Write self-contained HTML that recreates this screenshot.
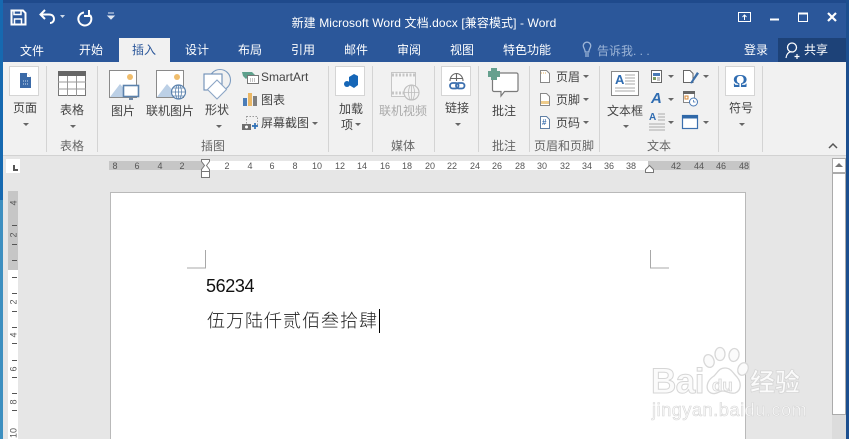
<!DOCTYPE html>
<html><head><meta charset="utf-8"><style>
html,body{margin:0;padding:0;width:849px;height:439px;overflow:hidden;background:#e6e6e6}
body{position:relative;font-family:"Liberation Sans","Noto Sans CJK SC",sans-serif;font-size:12px;color:#444}
.t{position:absolute;white-space:nowrap;line-height:16px;transform:translateX(-50%)}
.l{position:absolute;white-space:nowrap;line-height:16px}
.sep{position:absolute;top:66px;width:1px;height:86px;background:#d4d4d4}
.w{color:#fff}
.ar{position:absolute;width:0;height:0;border-left:3px solid transparent;border-right:3px solid transparent;border-top:3px solid #666}
.n{position:absolute;font-size:9px;line-height:10px;color:#555;transform:translateX(-50%);top:161px}
.box{position:absolute;top:66px;width:30px;height:30px;background:#fff;border:1px solid #d5d5d5;box-sizing:border-box}
svg{position:absolute;overflow:visible}
</style></head><body>
<!-- title + tabs -->
<div style="position:absolute;left:0;top:0;width:849px;height:62px;background:#2b579a"></div>
<div style="position:absolute;left:0;top:0;width:849px;height:3px;background:#1f4a8c"></div>
<div style="position:absolute;left:0;top:0;width:3px;height:439px;background:#1669b0"></div>
<div style="position:absolute;left:0;top:200px;width:3px;height:239px;background:#3d8fc0"></div>
<div style="position:absolute;left:846px;top:0;width:3px;height:439px;background:#1c4f8f"></div>
<div style="position:absolute;left:119px;top:38px;width:51px;height:24px;background:#f1f1f1"></div>
<div style="position:absolute;left:778px;top:38px;width:68px;height:24px;background:#1d4278"></div>

<svg style="left:0;top:0" width="849" height="62" fill="none">
<path d="M11.500 10.500h11.500l2.500 2.500v11.500h-14z" stroke="#fff" stroke-width="2"/>
<path d="M14 10.500h7v4h-7zM14.500 24v-5h7v5" stroke="#fff" stroke-width="1.500"/>
<path d="M41 14.500h8c4 0 5 2.500 5 4.500s-1.500 4-4 4M45 10l-4.500 4.500L45 19" stroke="#fff" stroke-width="2"/>
<path d="M60 15h5l-2.500 3z" fill="#cfdaea"/>
<path d="M84 12.500a6.500 6.500 0 1 0 6 2.500M89 10v6h-5" stroke="#fff" stroke-width="2"/>
<path d="M108 13h6M108 16h6l-3 3z" fill="#dfe6f1" stroke="#dfe6f1"/>
<rect x="738.500" y="12.500" width="12" height="9" stroke="#fff"/>
<path d="M744.500 20v-5M742.500 17l2-2 2 2M741 12.500h7" stroke="#fff"/>
<path d="M770 19.500h9" stroke="#fff" stroke-width="2"/>
<rect x="798.500" y="13" width="9" height="8.500" stroke="#fff"/><path d="M798 13.500h10" stroke="#fff" stroke-width="2"/>
<path d="M828 13l8 8M836 13l-8 8" stroke="#fff" stroke-width="2.200"/>
<path d="M585 56h4M585 54h4M583.500 47a3.700 3.700 0 1 1 7 0c-.5 1.500-1.500 2.500-1.700 5h-3.600c-.2-2.500-1.200-3.500-1.700-5z" stroke="#9db5d7" stroke-width="1.300"/>
<circle cx="792" cy="47.500" r="4.500" stroke="#fff" stroke-width="1.300"/>
<path d="M786 58c.5-4 2.500-6 5.500-6.500M797 54v5M794.500 56.500h5" stroke="#fff" stroke-width="1.200"/>
</svg>

<div class="t w" style="left:424px;top:14.500px;font-size:12px;letter-spacing:.1px">新建 Microsoft Word 文档.docx [兼容模式] - Word</div>
<div class="t w" style="left:32px;top:43px">文件</div>
<div class="t w" style="left:91px;top:42px">开始</div>
<div class="t" style="left:144px;top:42px;color:#2b579a">插入</div>
<div class="t w" style="left:197px;top:42px">设计</div>
<div class="t w" style="left:250px;top:42px">布局</div>
<div class="t w" style="left:303px;top:42px">引用</div>
<div class="t w" style="left:356px;top:42px">邮件</div>
<div class="t w" style="left:409px;top:42px">审阅</div>
<div class="t w" style="left:462px;top:42px">视图</div>
<div class="t w" style="left:527px;top:42px">特色功能</div>
<div class="l" style="left:597px;top:43px;color:#9db5d7">告诉我. . .</div>
<div class="t w" style="left:756px;top:42px">登录</div>
<div class="l w" style="left:804px;top:42px">共享</div>

<!-- ribbon -->
<div style="position:absolute;left:3px;top:62px;width:843px;height:93px;background:#f1f1f1;border-bottom:1px solid #d2d2d2;box-sizing:content-box"></div>

<div class="sep" style="left:46px"></div><div class="sep" style="left:97px"></div>
<div class="sep" style="left:328px"></div><div class="sep" style="left:372px"></div>
<div class="sep" style="left:434px"></div><div class="sep" style="left:478px"></div>
<div class="sep" style="left:529px"></div><div class="sep" style="left:599px"></div>
<div class="sep" style="left:718px"></div><div class="sep" style="left:762px"></div>

<div class="box" style="left:9px"></div>
<div class="box" style="left:335px"></div>
<div class="box" style="left:441px"></div>
<div class="box" style="left:725px"></div>

<svg style="left:0;top:0" width="849" height="160" fill="none">
<!-- page -->
<path d="M20 73h7l4 4v11H20z" fill="#3b6aa8"/><path d="M27 73l4 4h-4z" fill="#fff"/><path d="M23 81h5M23 84h5" stroke="#cfe0f2" stroke-dasharray="1 1"/>
<!-- table -->
<rect x="58.500" y="71.500" width="27" height="24" fill="#fff" stroke="#777"/>
<rect x="58" y="71" width="28" height="5" fill="#666"/>
<path d="M58 82h28M58 89h28M67.500 76v20M76.500 76v20" stroke="#999"/>
<!-- picture -->
<rect x="109.500" y="70.500" width="27" height="27" fill="#fff" stroke="#8a8a8a"/>
<circle cx="130" cy="77" r="3" fill="#f0bd6c"/>
<path d="M110 97l10-13 8 9 3 4z" fill="#bcd0e6"/>
<rect x="123.500" y="85.500" width="15" height="11" fill="#fff" stroke="#5b82ad" stroke-width="1.600"/>
<path d="M129 99h4" stroke="#44688f" stroke-width="1.500"/>
<!-- online picture -->
<rect x="156.500" y="70.500" width="27" height="27" fill="#fff" stroke="#8a8a8a"/>
<circle cx="177" cy="77" r="3" fill="#f0bd6c"/>
<path d="M157 97l10-13 8 9 3 4z" fill="#bcd0e6"/>
<circle cx="178.500" cy="92" r="7" fill="#fff" stroke="#5b82ad" stroke-width="1.200"/>
<path d="M171.500 92h14M173 88h11M173 96h11M178.500 85v14" stroke="#5b82ad" stroke-width=".8"/>
<ellipse cx="178.500" cy="92" rx="3" ry="7" stroke="#5b82ad" stroke-width=".8"/>
<!-- shapes -->
<circle cx="220" cy="80" r="10.500" stroke="#7d9cc0" stroke-width="1.100"/>
<rect x="204" y="74" width="18" height="16" fill="#fff" stroke="#6c8db5" stroke-width="1.100"/>
<path d="M217 80l9.500 9.500-9.500 9.500-9.500-9.500z" fill="#fff" stroke="#8ca6c6" stroke-width="1.100"/>
<!-- smartart -->
<path d="M242 72h10l4 4h-7l-3 3-3-3z" fill="#5ea08c"/>
<rect x="247.500" y="75.500" width="11" height="8" fill="#fff" stroke="#777"/><path d="M250 79h6M250 81h6" stroke="#888" stroke-dasharray="1 1"/>
<!-- chart -->
<rect x="243" y="98" width="4" height="8" fill="#4b7db8"/><rect x="248" y="93" width="4" height="13" fill="#eab765"/><rect x="253" y="96" width="4" height="10" fill="#7f7f7f"/>
<!-- screenshot -->
<rect x="246.500" y="116.500" width="11" height="9" stroke="#999" stroke-dasharray="1.500 1.500"/>
<rect x="242" y="124" width="9" height="6" fill="#6e6e6e"/><circle cx="246.500" cy="127" r="1.500" fill="#fff"/>
<path d="M255 123v6M252 126h6" stroke="#2e70b6" stroke-width="1.700"/>
<!-- addins -->
<path d="M349 77l5-3 4 2v9l-4 3-5-3z" fill="#1566b7"/><circle cx="347" cy="84" r="3" fill="#1566b7"/>
<!-- video -->
<rect x="391.500" y="72.500" width="24" height="24" fill="#f6f6f6" stroke="#c6c6c6"/>
<path d="M392 75h23M392 93h23" stroke="#c6c6c6" stroke-width="3" stroke-dasharray="2 1.500"/>
<circle cx="411.500" cy="92.500" r="7.500" fill="#f3f3f3" stroke="#bdbdbd" stroke-width="1.100"/>
<path d="M404 92.500h15M411.500 85v15" stroke="#bdbdbd" stroke-width=".8"/><ellipse cx="411.500" cy="92.500" rx="3" ry="7.500" stroke="#bdbdbd" stroke-width=".8"/>
<!-- link -->
<path d="M450 81a6.500 7.500 0 0 1 13 0M450 78.500h13M456.500 73.500v7.500" stroke="#666" stroke-width="1.100"/>
<rect x="450" y="83" width="8.500" height="5.500" rx="2.700" stroke="#3b6fae" stroke-width="1.800"/><rect x="456" y="83" width="8.500" height="5.500" rx="2.700" stroke="#3b6fae" stroke-width="1.800"/>
<!-- comment -->
<path d="M492.500 73h24a1.500 1.500 0 0 1 1.500 1.500V90a1.500 1.500 0 0 1-1.500 1.500h-12l-3.500 4.500v-4.500h-7a1.500 1.500 0 0 1-1.500-1.500V75" fill="#fff" stroke="#7a7a7a" stroke-width="1.200"/>
<path d="M491 68h6v3h3v6h-3v3h-6v-3h-3v-6h3z" fill="#66a08e"/>
<!-- header/footer/pagenum -->
<path d="M540.500 70.500h6l3 3v9h-9z" fill="#fff" stroke="#888"/><path d="M541 73h5" stroke="#e0b060" stroke-dasharray="1 1"/>
<path d="M540.500 93.500h6l3 3v9h-9z" fill="#fff" stroke="#888"/><rect x="541" y="101" width="8" height="3" fill="#eecb8a"/>
<path d="M540.500 116.500h6l3 3v9h-9z" fill="#fff" stroke="#5f7fa5"/>
<!-- textbox -->
<rect x="611.500" y="71.500" width="27" height="24" fill="#fff" stroke="#888"/>
<path d="M625 75h10M625 78h10M625 81h10M625 84h10M615 88h20M615 91h20" stroke="#aaa"/>
<!-- quick parts -->
<rect x="651.500" y="70.500" width="10" height="12" fill="#fff" stroke="#666"/><rect x="653" y="73" width="7" height="3" fill="#4a7ab5"/><rect x="653" y="77" width="3" height="3" fill="#7a9a60"/><path d="M657 78h3M657 80h3" stroke="#888"/>
<!-- signature -->
<path d="M683.500 70.500h6.500l3 3v9h-9.500z" stroke="#666" fill="#fff"/>
<path d="M690 83l7-11 2 1.500-7 10z" fill="#3d6fa8"/>
<!-- date -->
<rect x="683.500" y="91.500" width="11" height="11" fill="#fff" stroke="#888"/><rect x="683" y="91" width="12" height="3" fill="#666"/><path d="M685 96h3v3h-3z" stroke="#d8862f"/>
<circle cx="693.500" cy="102" r="4" fill="#fff" stroke="#4a7ab5"/><path d="M693.500 100v2h2" stroke="#4a7ab5" stroke-width=".8"/>
<!-- object -->
<rect x="682.500" y="115.500" width="15" height="13" fill="#fff" stroke="#3b6fae" stroke-width="1.200"/><rect x="682" y="115" width="16" height="3.500" fill="#2f68a8"/>
<!-- dropcap lines -->
<path d="M658 114h7M658 117h7M658 120h7M649 124h16M649 127h16M649 130h16" stroke="#aaa" stroke-width=".9"/>
<!-- collapse -->
<path d="M829 148l4-4 4 4" stroke="#555" stroke-width="1.500"/>
</svg>

<div class="l" style="left:615px;top:72px;font-size:13px;font-weight:700;color:#2f6cb1">A</div>
<div class="l" style="left:649px;top:110px;font-size:10px;font-weight:700;color:#2f6cb1">A</div>
<div class="l" style="left:651px;top:91px;font-size:15px;font-weight:700;font-style:italic;color:#2f6cb1">A</div>
<div class="l" style="left:733px;top:72px;font-family:'Liberation Serif',serif;font-size:18px;font-weight:700;color:#2f6cb1;line-height:18px">Ω</div>
<div class="l" style="left:542px;top:118px;font-size:8px;font-weight:700;line-height:10px;color:#3b6fae">#</div>

<div class="t" style="left:25px;top:100px">页面</div>
<div class="t" style="left:72px;top:102px">表格</div>
<div class="t" style="left:123px;top:103px">图片</div>
<div class="t" style="left:170px;top:103px">联机图片</div>
<div class="t" style="left:217px;top:102px">形状</div>
<div class="l" style="left:261px;top:69px">SmartArt</div>
<div class="l" style="left:261px;top:92px">图表</div>
<div class="l" style="left:261px;top:115px">屏幕截图</div>
<div class="t" style="left:351px;top:101px">加载</div>
<div class="t" style="left:347px;top:117px">项</div>
<div class="t" style="left:403px;top:103px;color:#aaa">联机视频</div>
<div class="t" style="left:457px;top:100px">链接</div>
<div class="t" style="left:504px;top:103px">批注</div>
<div class="l" style="left:556px;top:69px">页眉</div>
<div class="l" style="left:556px;top:92px">页脚</div>
<div class="l" style="left:556px;top:115px">页码</div>
<div class="t" style="left:625px;top:103px">文本框</div>
<div class="t" style="left:741px;top:100px">符号</div>

<div class="t" style="left:72px;top:138px;color:#666">表格</div>
<div class="t" style="left:213px;top:138px;color:#666">插图</div>
<div class="t" style="left:403px;top:138px;color:#666">媒体</div>
<div class="t" style="left:504px;top:138px;color:#666">批注</div>
<div class="t" style="left:564px;top:138px;color:#666">页眉和页脚</div>
<div class="t" style="left:659px;top:138px;color:#666">文本</div>

<div class="ar" style="left:23px;top:123px"></div>
<div class="ar" style="left:70px;top:125px"></div>
<div class="ar" style="left:216px;top:125px"></div>
<div class="ar" style="left:312px;top:122px"></div>
<div class="ar" style="left:355px;top:123px"></div>
<div class="ar" style="left:455px;top:123px"></div>
<div class="ar" style="left:583px;top:75px"></div>
<div class="ar" style="left:583px;top:98px"></div>
<div class="ar" style="left:583px;top:121px"></div>
<div class="ar" style="left:623px;top:125px"></div>
<div class="ar" style="left:668px;top:75px"></div>
<div class="ar" style="left:668px;top:98px"></div>
<div class="ar" style="left:668px;top:121px"></div>
<div class="ar" style="left:703px;top:75px"></div>
<div class="ar" style="left:703px;top:121px"></div>
<div class="ar" style="left:739px;top:123px"></div>

<!-- corner box -->
<div style="position:absolute;left:6px;top:159px;width:14px;height:14px;background:#fff"></div>
<div style="position:absolute;left:13px;top:165px;width:2px;height:5px;background:#555"></div>
<div style="position:absolute;left:13px;top:169px;width:5px;height:2px;background:#555"></div>

<!-- h ruler -->
<div style="position:absolute;left:109px;top:161px;width:96px;height:9px;background:#c6c6c6"></div>
<div style="position:absolute;left:205px;top:161px;width:443px;height:9px;background:#fff"></div>
<div style="position:absolute;left:648px;top:161px;width:102px;height:9px;background:#c6c6c6"></div>
<div class="n" style="left:115px">8</div><div class="n" style="left:137px">6</div><div class="n" style="left:160px">4</div><div class="n" style="left:182px">2</div>
<div class="n" style="left:227px">2</div><div class="n" style="left:250px">4</div><div class="n" style="left:272px">6</div><div class="n" style="left:295px">8</div>
<div class="n" style="left:317px">10</div><div class="n" style="left:340px">12</div><div class="n" style="left:362px">14</div><div class="n" style="left:385px">16</div>
<div class="n" style="left:407px">18</div><div class="n" style="left:430px">20</div><div class="n" style="left:452px">22</div><div class="n" style="left:475px">24</div>
<div class="n" style="left:497px">26</div><div class="n" style="left:520px">28</div><div class="n" style="left:542px">30</div><div class="n" style="left:565px">32</div>
<div class="n" style="left:587px">34</div><div class="n" style="left:609px">36</div><div class="n" style="left:631px">38</div>
<div class="n" style="left:676px">42</div><div class="n" style="left:699px">44</div><div class="n" style="left:721px">46</div><div class="n" style="left:744px">48</div>
<svg style="left:0;top:0" width="849" height="439" fill="none">
<path d="M201.500 159.500h8v2l-3 4 3 4v2h-8v-2l3-4-3-4z" fill="#fff" stroke="#777"/>
<rect x="201.500" y="171.500" width="8" height="6" fill="#fff" stroke="#777"/>
<path d="M645.500 172.500v-3l4-4 4 4v3z" fill="#fff" stroke="#777"/>
</svg>

<!-- v ruler -->
<div style="position:absolute;left:8px;top:191px;width:10px;height:79px;background:#c6c6c6"></div>
<div style="position:absolute;left:8px;top:270px;width:10px;height:169px;background:#fff"></div>
<svg style="left:0;top:0" width="849" height="439" fill="#555" font-size="9" font-family="Liberation Sans">
<text transform="translate(16.500,203) rotate(-90)" text-anchor="middle">4</text>
<text transform="translate(16.500,235) rotate(-90)" text-anchor="middle">2</text>
<text transform="translate(16.500,302) rotate(-90)" text-anchor="middle">2</text>
<text transform="translate(16.500,335) rotate(-90)" text-anchor="middle">4</text>
<text transform="translate(16.500,369) rotate(-90)" text-anchor="middle">6</text>
<text transform="translate(16.500,402) rotate(-90)" text-anchor="middle">8</text>
<text transform="translate(16.500,433) rotate(-90)" text-anchor="middle">10</text>
<path d="M12 225h5v1h-5zM12 244h5v1h-5zM12 260h5v1h-5zM12 277h5v1h-5zM12 293h5v1h-5zM12 311h5v1h-5zM12 327h5v1h-5zM12 343h5v1h-5zM12 360h5v1h-5zM12 377h5v1h-5zM12 393h5v1h-5zM12 410h5v1h-5z"/>
</svg>

<!-- page -->
<div style="position:absolute;left:110px;top:192px;width:636px;height:250px;background:#fff;border:1px solid #b9b9b9;box-sizing:border-box"></div>
<svg style="left:0;top:0" width="849" height="439" fill="none">
<path d="M187 268h18.500V250" stroke="#a8a8a8"/>
<path d="M650.500 250v18H669" stroke="#a8a8a8"/>
</svg>
<div class="l" style="left:206px;top:276px;font-size:18px;line-height:20px;color:#111;letter-spacing:-.4px">56234</div>
<div class="l" style="left:207px;top:309px;font-size:18px;line-height:24px;color:#222;font-weight:300;letter-spacing:1px">伍万陆仟贰佰叁拾肆</div>
<div style="position:absolute;left:379px;top:309px;width:1px;height:24px;background:#000"></div>

<!-- scrollbar -->
<div style="position:absolute;left:832px;top:158px;width:14px;height:257px;background:#fff;border:1px solid #ababab;box-sizing:border-box"></div>
<div style="position:absolute;left:832px;top:172px;width:14px;height:2px;background:#ababab"></div>
<div style="position:absolute;left:835px;top:163px;width:0;height:0;border-left:4px solid transparent;border-right:4px solid transparent;border-bottom:4px solid #777"></div>
<div style="position:absolute;left:832px;top:415px;width:14px;height:24px;background:#dcdcdc"></div>

<!-- watermark -->
<div class="l" style="left:651px;top:364px;font-size:35px;line-height:36px;color:#fbfbfb;font-weight:700;-webkit-text-stroke:1px #d6d6d6;letter-spacing:-.5px">Bai</div>
<div class="l" style="left:712px;top:374px;font-size:17px;line-height:24px;color:#fbfbfb;font-weight:700;-webkit-text-stroke:.8px #d6d6d6">du</div>
<div class="l" style="left:750px;top:369px;font-size:25px;line-height:28px;color:#fbfbfb;font-weight:700;-webkit-text-stroke:.8px #d6d6d6">经验</div>
<div class="l" style="left:652px;top:399px;font-size:18px;line-height:22px;color:#fbfbfb;-webkit-text-stroke:.6px #d6d6d6;letter-spacing:.6px">jingyan.baidu.com</div>
<svg style="left:0;top:0" width="849" height="439" fill="none" stroke="#d8d8d8" stroke-width="1.300">
<ellipse cx="709" cy="361" rx="5" ry="6.500" transform="rotate(-20 709 361)" fill="#fbfbfb"/>
<ellipse cx="720" cy="354" rx="5" ry="6.500" fill="#fbfbfb"/>
<ellipse cx="734" cy="355" rx="5" ry="6.500" transform="rotate(10 734 355)" fill="#fbfbfb"/>
<ellipse cx="743" cy="369" rx="5" ry="6.500" transform="rotate(25 743 369)" fill="#fbfbfb"/>
<path d="M711 393c-6-3-5-12 3-17 4-4 5-8 11-8s8 5 12 9c5 6 4 14-2 16-6 1-8-2-12-2s-7 4-12 2z"/>
</svg>
</body></html>
